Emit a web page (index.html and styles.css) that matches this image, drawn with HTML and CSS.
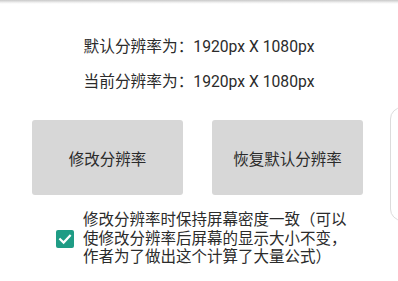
FILE: index.html
```html
<!DOCTYPE html>
<html lang="zh-CN">
<head>
<meta charset="utf-8">
<link rel="stylesheet" href="styles.css">
</head>
<body>
<div class="screen">
  <div class="topshadow"></div>
  <div class="info">
    <p class="line">默认分辨率为：1920px X 1080px</p>
    <p class="line">当前分辨率为：1920px X 1080px</p>
  </div>
  <div class="buttons">
    <button class="btn">修改分辨率</button>
    <button class="btn">恢复默认分辨率</button>
  </div>
  <label class="check">
    <span class="box"><svg width="18" height="18" viewBox="0 0 18 18"><path d="M4.2 9.3 L7.6 12.6 L13.9 5.8" fill="none" stroke="#fff" stroke-width="2.2" stroke-linecap="square"/></svg></span>
    <span class="checktext">修改分辨率时保持屏幕密度一致（可以使修改分辨率后屏幕的显示大小不变，作者为了做出这个计算了大量公式）</span>
  </label>
  <div class="peek"></div>
</div>
</body>
</html>
```
FILE: styles.css
```css
html, body {
  margin: 0;
  padding: 0;
  background: #fff;
}
.screen {
  position: relative;
  width: 398px;
  height: 281px;
  overflow: hidden;
  font-family: Roboto, "Noto Sans CJK SC", sans-serif;
  color: #2b2b2b;
}
.topshadow {
  height: 4px;
  background: linear-gradient(#c9c9c9, #f4f4f4 70%, #fff);
}
.info {
  margin-top: 33px;
  display: flex;
  flex-direction: column;
  align-items: center;
  gap: 15px;
}
.line {
  margin: 0;
  font-size: 15.7px;
  line-height: 20px;
}
.buttons {
  margin-top: 28px;
  display: flex;
  gap: 29px;
  padding-left: 32px;
}
.btn {
  width: 151px;
  height: 75px;
  border: none;
  border-radius: 3px;
  background: #d7d7d7;
  color: #2b2b2b;
  font-family: Roboto, "Noto Sans CJK SC", sans-serif;
  font-size: 15.5px;
  padding: 0;
}
.check {
  margin-top: 16px;
  display: flex;
  align-items: center;
  gap: 9px;
  padding-left: 56px;
}
.box {
  width: 18px;
  height: 18px;
  border-radius: 2px;
  background: #1f9c85;
  display: flex;
  flex-shrink: 0;
}
.checktext {
  width: 272px;
  font-size: 15.5px;
  line-height: 18.5px;
  color: #2b2b2b;
}
.peek {
  position: absolute;
  left: 390px;
  top: 107px;
  width: 40px;
  height: 112px;
  border: 1px solid #dcdcdc;
  border-radius: 12px;
}
```
